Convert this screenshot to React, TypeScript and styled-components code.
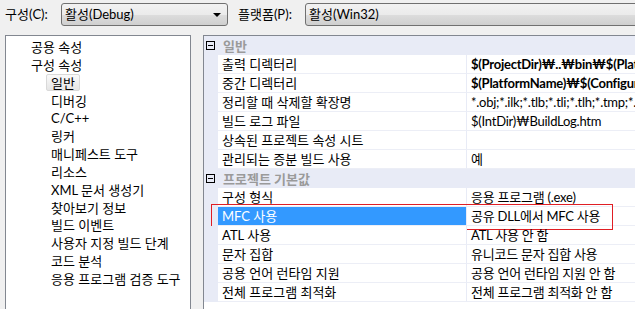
import React from "react";
import styled, { createGlobalStyle } from "styled-components";

const Global = createGlobalStyle`
  html, body { margin: 0; padding: 0; background: #f0f0f0; }
  body { font-family: Lato, "Noto Sans CJK KR", sans-serif; font-size: 13px; color: #000; }
`;

const Root = styled.div`
  width: 635px;
  height: 309px;
  overflow: hidden;
  background: #f0f0f0;
  position: relative;
`;

const TopBar = styled.div`
  display: flex;
  align-items: flex-start;
  height: 35px;
  padding: 3px 0 0 5px;
  box-sizing: border-box;
  white-space: nowrap;
`;

const Label = styled.div<{ $w: number }>`
  width: ${(p) => p.$w}px;
  flex: none;
  height: 23px;
  line-height: 23px;
`;

const Combo = styled.div<{ $w: number; $gapAfter?: number }>`
  position: relative;
  flex: none;
  width: ${(p) => p.$w}px;
  height: 23px;
  box-sizing: border-box;
  margin-right: ${(p) => p.$gapAfter ?? 0}px;
  border: 1px solid #707070;
  border-radius: 3px;
  background: linear-gradient(#f2f2f2 0%, #ebebeb 50%, #dddddd 51%, #cfcfcf 100%);
  line-height: 21px;
  padding-left: 3px;
`;

const Arrow = styled.span`
  position: absolute;
  right: 6px;
  top: 9px;
  width: 0;
  height: 0;
  border-left: 4px solid transparent;
  border-right: 4px solid transparent;
  border-top: 4px solid #000;
`;

const Body = styled.div`
  display: flex;
  gap: 12px;
  padding-left: 5px;
  height: 274px;
`;

const TreePanel = styled.div`
  flex: none;
  width: 186px;
  height: 290px;
  box-sizing: border-box;
  border: 1px solid #828790;
  background: #fff;
  padding-top: 2px;
`;

const TreeItem = styled.div<{ $level: number }>`
  height: 17.85px;
  line-height: 17.85px;
  padding-left: ${(p) => (p.$level === 1 ? 20 : 40)}px;
  white-space: nowrap;
`;

const TreeText = styled.span<{ $selected?: boolean }>`
  display: inline-block;
  height: 17px;
  line-height: 16px;
  padding: 0 4px;
  box-sizing: border-box;
  border: 1px solid ${(p) => (p.$selected ? "#d9d9d9" : "transparent")};
  border-radius: 2px;
  background: ${(p) => (p.$selected ? "linear-gradient(#fafafa, #e5e5e5)" : "transparent")};
`;

const Grid = styled.div`
  flex: none;
  width: 520px;
  height: 290px;
  box-sizing: border-box;
  border: 1px solid #828790;
  border-right: none;
  background: #fff;
`;

const GroupRow = styled.div`
  display: flex;
  align-items: center;
  height: 19px;
  background: #e8ebf6;
  color: #9a9a9a;
  font-weight: bold;
  white-space: nowrap;
`;

const Toggle = styled.span`
  position: relative;
  flex: none;
  width: 9px;
  height: 9px;
  box-sizing: border-box;
  border: 1px solid #000;
  margin: 0 8px 0 2px;
  &::after {
    content: "";
    position: absolute;
    left: 1px;
    right: 1px;
    top: 3px;
    height: 1px;
    background: #000;
  }
`;

const PropRow = styled.div`
  position: relative;
  display: grid;
  grid-template-columns: 14px 248px 1fr;
  height: 19px;
  white-space: nowrap;
`;

const Gutter = styled.div`
  background: #e8ebf6;
`;

const NameCell = styled.div<{ $selected?: boolean }>`
  height: 18px;
  line-height: 18px;
  padding-left: 4px;
  border-bottom: 1px solid #eceef6;
  overflow: hidden;
  background: ${(p) => (p.$selected ? "#3399ff" : "#fff")};
  color: ${(p) => (p.$selected ? "#fff" : "#000")};
`;

const ValueCell = styled.div<{ $bold?: boolean }>`
  height: 18px;
  line-height: 18px;
  padding-left: 4px;
  border-left: 1px solid #e8ebf6;
  border-bottom: 1px solid #eceef6;
  overflow: hidden;
  letter-spacing: -0.25px;
  font-weight: ${(p) => (p.$bold ? "bold" : "normal")};
`;

const Highlight = styled.div`
  position: absolute;
  left: 7px;
  top: -3px;
  width: 402px;
  height: 26px;
  box-sizing: border-box;
  border: 1px solid #e01e24;
  pointer-events: none;
`;

type Prop = { name: string; value: string; bold?: boolean; selected?: boolean };

const groups: { title: string; props: Prop[] }[] = [
  {
    title: "일반",
    props: [
      { name: "출력 디렉터리", value: "$(ProjectDir)₩..₩bin₩$(PlatformName)₩$(ConfigurationName)₩", bold: true },
      { name: "중간 디렉터리", value: "$(PlatformName)₩$(ConfigurationName)₩", bold: true },
      { name: "정리할 때 삭제할 확장명", value: "*.obj;*.ilk;*.tlb;*.tli;*.tlh;*.tmp;*.rsp;*.pgc;*.pgd" },
      { name: "빌드 로그 파일", value: "$(IntDir)₩BuildLog.htm" },
      { name: "상속된 프로젝트 속성 시트", value: "" },
      { name: "관리되는 증분 빌드 사용", value: "예" },
    ],
  },
  {
    title: "프로젝트 기본값",
    props: [
      { name: "구성 형식", value: "응용 프로그램 (.exe)" },
      { name: "MFC 사용", value: "공유 DLL에서 MFC 사용", selected: true },
      { name: "ATL 사용", value: "ATL 사용 안 함" },
      { name: "문자 집합", value: "유니코드 문자 집합 사용" },
      { name: "공용 언어 런타임 지원", value: "공용 언어 런타임 지원 안 함" },
      { name: "전체 프로그램 최적화", value: "전체 프로그램 최적화 안 함" },
    ],
  },
];

const tree: { label: string; level: number; selected?: boolean }[] = [
  { label: "공용 속성", level: 1 },
  { label: "구성 속성", level: 1 },
  { label: "일반", level: 2, selected: true },
  { label: "디버깅", level: 2 },
  { label: "C/C++", level: 2 },
  { label: "링커", level: 2 },
  { label: "매니페스트 도구", level: 2 },
  { label: "리소스", level: 2 },
  { label: "XML 문서 생성기", level: 2 },
  { label: "찾아보기 정보", level: 2 },
  { label: "빌드 이벤트", level: 2 },
  { label: "사용자 지정 빌드 단계", level: 2 },
  { label: "코드 분석", level: 2 },
  { label: "응용 프로그램 검증 도구", level: 2 },
];

export default function App() {
  return (
    <Root>
      <Global />
      <TopBar>
        <Label $w={56}>구성(C):</Label>
        <Combo $w={167} $gapAfter={10}>
          활성(Debug)
          <Arrow />
        </Combo>
        <Label $w={67}>플랫폼(P):</Label>
        <Combo $w={360}>활성(Win32)</Combo>
      </TopBar>
      <Body>
        <TreePanel>
          {tree.map((t) => (
            <TreeItem key={t.label} $level={t.level}>
              <TreeText $selected={t.selected}>{t.label}</TreeText>
            </TreeItem>
          ))}
        </TreePanel>
        <Grid>
          {groups.map((g) => (
            <React.Fragment key={g.title}>
              <GroupRow>
                <Toggle />
                {g.title}
              </GroupRow>
              {g.props.map((p) => (
                <PropRow key={p.name}>
                  <Gutter />
                  <NameCell $selected={p.selected}>{p.name}</NameCell>
                  <ValueCell $bold={p.bold}>{p.value}</ValueCell>
                  {p.selected && <Highlight />}
                </PropRow>
              ))}
            </React.Fragment>
          ))}
        </Grid>
      </Body>
    </Root>
  );
}
